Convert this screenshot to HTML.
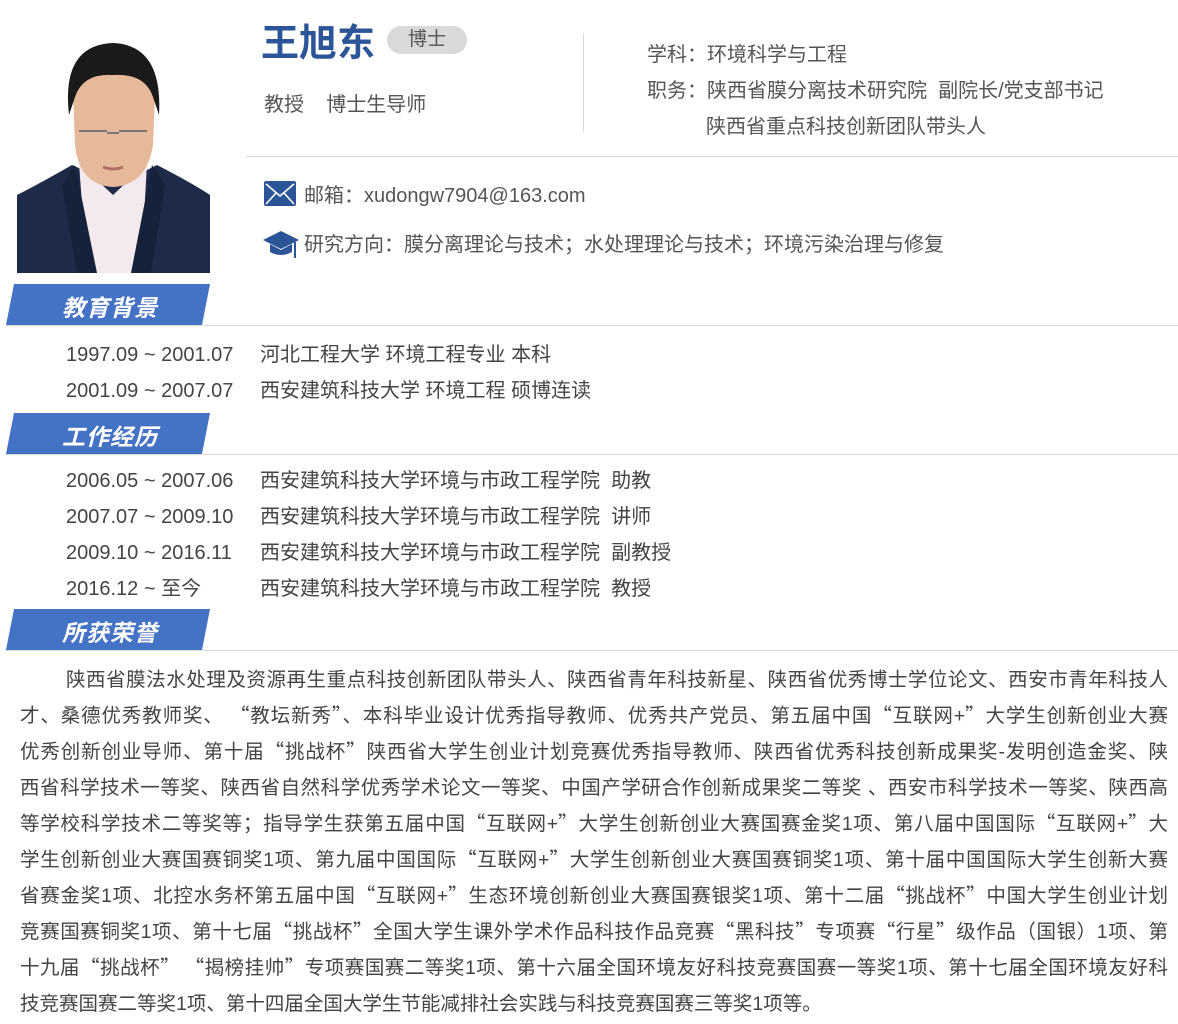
<!DOCTYPE html>
<html><head><meta charset="utf-8"><style>
body{margin:0;width:1178px;height:1024px;background:#fff;position:relative;overflow:hidden;font-family:"Liberation Sans","Noto Sans CJK SC",sans-serif;color:#444}
.a{position:absolute;white-space:nowrap}
.t{font-size:20px;line-height:24px}
.tab{position:absolute;left:6px;width:204px;height:41px}
.tab svg{position:absolute;left:0;top:0}
.tab span{position:absolute;left:56px;top:5px;color:#fff;font-size:23px;font-weight:bold;font-style:italic;letter-spacing:1px}
.hl{position:absolute;left:6px;right:0;height:1px;background:#d8d8d8}
.hon{position:absolute;left:20px;width:1148px;top:662px;font-size:19.5px;color:#444}
.hon div{height:36px;line-height:36px;text-align:justify;text-align-last:justify;white-space:nowrap;overflow:hidden}
.q{font-family:"Noto Sans CJK SC",sans-serif;line-height:0;vertical-align:baseline}
</style></head><body>
<svg class="a" style="left:17px;top:35px" width="193" height="238" viewBox="0 0 193 238">
<rect width="193" height="238" fill="#fff"/>
<path d="M0 210 L0 160 Q20 150 55 130 L100 150 L140 130 Q175 148 193 160 L193 238 L0 238Z" fill="#1d2b48"/>
<path d="M62 128 L96 160 L130 128 L124 238 L70 238Z" fill="#f4e9ee"/>
<path d="M58 130 L80 238 L60 238 L45 150Z" fill="#16223a"/>
<path d="M135 130 L114 238 L134 238 L148 150Z" fill="#16223a"/>
<rect x="78" y="110" width="38" height="36" fill="#dcae8e"/>
<path d="M56 60 Q54 30 96 26 Q140 30 138 62 L136 110 Q130 150 96 152 Q62 150 58 110Z" fill="#e6b99a"/>
<path d="M52 80 Q44 10 96 8 Q146 10 142 80 L136 62 Q128 38 96 40 Q66 38 58 62Z" fill="#1a1a1a"/>
<path d="M62 96 h28 M102 96 h28 M90 98 h12" stroke="#777" stroke-width="2"/>
<path d="M86 132 Q96 136 106 132" stroke="#b07060" stroke-width="3" fill="none"/>
</svg>
<div class="a" style="left:261px;top:15px;font-size:38px;font-weight:bold;color:#2c5597;line-height:50px;font-family:'Noto Sans CJK SC',sans-serif">王旭东</div>
<div class="a" style="left:387px;top:26px;width:80px;height:28px;border-radius:14px;background:#d9d9d9;text-align:center;font-size:19px;line-height:28px;color:#555">博士</div>
<div class="a t" style="left:264px;top:93px;color:#555">教授&nbsp;&nbsp;&nbsp;&nbsp;博士生导师</div>
<div class="a" style="left:583px;top:33px;width:1px;height:99px;background:#d8d8d8"></div>
<div class="a t" style="left:647px;top:43px;color:#555">学科：环境科学与工程</div>
<div class="a t" style="left:647px;top:79px;color:#555">职务：陕西省膜分离技术研究院&nbsp;&nbsp;副院长/党支部书记</div>
<div class="a t" style="left:706px;top:115px;color:#555">陕西省重点科技创新团队带头人</div>
<div class="a" style="left:246px;top:156px;width:932px;height:1px;background:#d8d8d8"></div>
<svg class="a" style="left:264px;top:181px" width="32" height="25" viewBox="0 0 32 25"><rect width="32" height="25" rx="2" fill="#2c5597"/><path d="M2 3 L16 15 L30 3 M2 23 L12 12 M30 23 L20 12" stroke="#fff" stroke-width="1.6" fill="none"/></svg>
<div class="a t" style="left:304px;top:184px;color:#555">邮箱：xudongw7904@163.com</div>
<svg class="a" style="left:261px;top:228px" width="40" height="36" viewBox="0 0 40 36"><path d="M2 12 L20 3 L38 12 L20 21Z" fill="#2c5597"/><path d="M9 16 V24 Q20 30 31 24 V16 L20 22Z" fill="#2c5597"/><path d="M34 14 V30" stroke="#2c5597" stroke-width="2"/></svg>
<div class="a t" style="left:304px;top:233px;color:#555">研究方向：膜分离理论与技术；水处理理论与技术；环境污染治理与修复</div>

<div class="tab" style="top:284px"><svg width="204" height="41"><path d="M8 0 H204 L196 41 H0Z" fill="#4472c4"/></svg><span>教育背景</span></div>
<div class="hl" style="top:325px"></div>
<div class="a t" style="left:66px;top:343px">1997.09 ~ 2001.07</div><div class="a t" style="left:260px;top:343px">河北工程大学 环境工程专业 本科</div>
<div class="a t" style="left:66px;top:379px">2001.09 ~ 2007.07</div><div class="a t" style="left:260px;top:379px">西安建筑科技大学 环境工程 硕博连读</div>

<div class="tab" style="top:413px"><svg width="204" height="41"><path d="M8 0 H204 L196 41 H0Z" fill="#4472c4"/></svg><span>工作经历</span></div>
<div class="hl" style="top:454px"></div>
<div class="a t" style="left:66px;top:469px">2006.05 ~ 2007.06</div><div class="a t" style="left:260px;top:469px">西安建筑科技大学环境与市政工程学院&nbsp;&nbsp;助教</div>
<div class="a t" style="left:66px;top:505px">2007.07 ~ 2009.10</div><div class="a t" style="left:260px;top:505px">西安建筑科技大学环境与市政工程学院&nbsp;&nbsp;讲师</div>
<div class="a t" style="left:66px;top:541px">2009.10 ~ 2016.11</div><div class="a t" style="left:260px;top:541px">西安建筑科技大学环境与市政工程学院&nbsp;&nbsp;副教授</div>
<div class="a t" style="left:66px;top:577px">2016.12 ~ 至今</div><div class="a t" style="left:260px;top:577px">西安建筑科技大学环境与市政工程学院&nbsp;&nbsp;教授</div>

<div class="tab" style="top:609px"><svg width="204" height="41"><path d="M8 0 H204 L196 41 H0Z" fill="#4472c4"/></svg><span>所获荣誉</span></div>
<div class="hl" style="top:650px"></div>
<div class="hon">
<div style="padding-left:46px">陕西省膜法水处理及资源再生重点科技创新团队带头人、陕西省青年科技新星、陕西省优秀博士学位论文、西安市青年科技人</div>
<div>才、桑德优秀教师奖、 <span class="q">“</span>教坛新秀<span class="q">”</span>、本科毕业设计优秀指导教师、优秀共产党员、第五届中国<span class="q">“</span>互联网+<span class="q">”</span>大学生创新创业大赛</div>
<div>优秀创新创业导师、第十届<span class="q">“</span>挑战杯<span class="q">”</span>陕西省大学生创业计划竞赛优秀指导教师、陕西省优秀科技创新成果奖-发明创造金奖、陕</div>
<div>西省科学技术一等奖、陕西省自然科学优秀学术论文一等奖、中国产学研合作创新成果奖二等奖 、西安市科学技术一等奖、陕西高</div>
<div>等学校科学技术二等奖等；指导学生获第五届中国<span class="q">“</span>互联网+<span class="q">”</span>大学生创新创业大赛国赛金奖1项、第八届中国国际<span class="q">“</span>互联网+<span class="q">”</span>大</div>
<div>学生创新创业大赛国赛铜奖1项、第九届中国国际<span class="q">“</span>互联网+<span class="q">”</span>大学生创新创业大赛国赛铜奖1项、第十届中国国际大学生创新大赛</div>
<div>省赛金奖1项、北控水务杯第五届中国<span class="q">“</span>互联网+<span class="q">”</span>生态环境创新创业大赛国赛银奖1项、第十二届<span class="q">“</span>挑战杯<span class="q">”</span>中国大学生创业计划</div>
<div>竞赛国赛铜奖1项、第十七届<span class="q">“</span>挑战杯<span class="q">”</span>全国大学生课外学术作品科技作品竞赛<span class="q">“</span>黑科技<span class="q">”</span>专项赛<span class="q">“</span>行星<span class="q">”</span>级作品（国银）1项、第</div>
<div>十九届<span class="q">“</span>挑战杯<span class="q">” “</span>揭榜挂帅<span class="q">”</span>专项赛国赛二等奖1项、第十六届全国环境友好科技竞赛国赛一等奖1项、第十七届全国环境友好科</div>
<div style="text-align-last:left">技竞赛国赛二等奖1项、第十四届全国大学生节能减排社会实践与科技竞赛国赛三等奖1项等。</div>
</div>
</body></html>
